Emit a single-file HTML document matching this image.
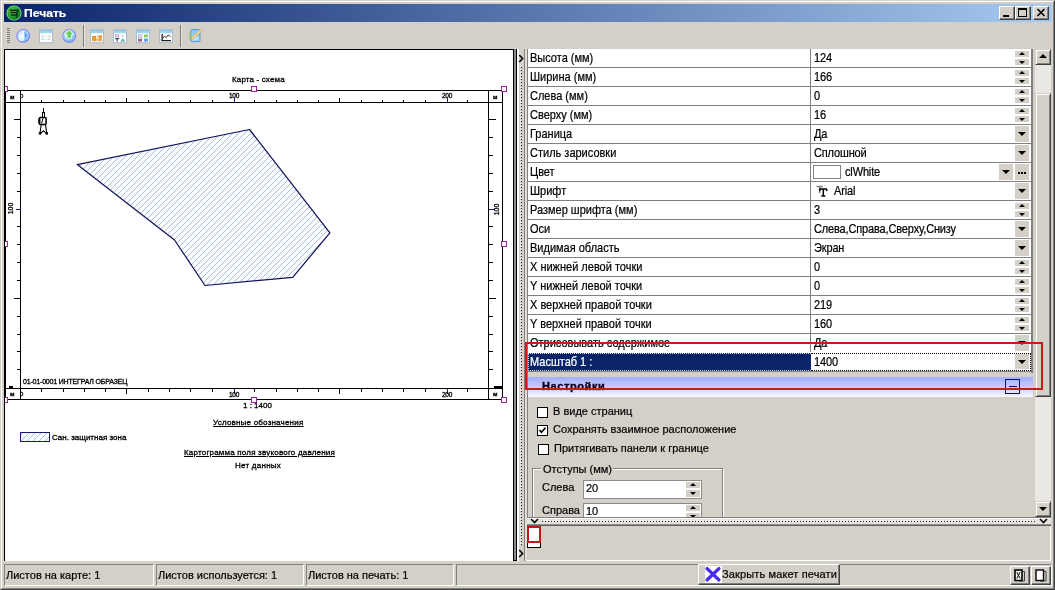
<!DOCTYPE html>
<html lang="ru"><head><meta charset="utf-8"><title>Печать</title>
<style>
html,body{margin:0;padding:0;background:#d4d0c8;}
body{width:1055px;height:590px;overflow:hidden;position:relative;font-family:"Liberation Sans",sans-serif;font-size:11px;color:#000;}
#win{position:absolute;left:0;top:0;width:1055px;height:590px;background:#d4d0c8;overflow:hidden;will-change:transform;}
#win div{position:absolute;box-sizing:border-box;}
#win svg{position:absolute;overflow:visible;}
.t{white-space:nowrap;line-height:13px;height:13px;font-size:11px;-webkit-text-stroke:0.2px currentColor;}
.g{transform:scaleY(1.12);transform-origin:50% 60%;}
.m{white-space:nowrap;line-height:9px;height:9px;font-size:7px;font-family:"Liberation Sans",sans-serif;-webkit-text-stroke:0.3px #000;}
.btn{background:#d4d0c8;border:1px solid;border-color:#fff #404040 #404040 #fff;box-shadow:inset -1px -1px 0 #808080;}
.sb{background:#d4d0c8;border:1px solid;border-color:#d4d0c8 #404040 #404040 #d4d0c8;box-shadow:inset 1px 1px 0 #fff,inset -1px -1px 0 #808080;}
.flat{background:#d4d0c8;}
.tri-d{width:0;height:0;border-left:4px solid transparent;border-right:4px solid transparent;border-top:4px solid #000;}
.tri-u{width:0;height:0;border-left:4px solid transparent;border-right:4px solid transparent;border-bottom:4px solid #000;}
.tri-ds{width:0;height:0;border-left:3px solid transparent;border-right:3px solid transparent;border-top:3px solid #000;}
.tri-us{width:0;height:0;border-left:3px solid transparent;border-right:3px solid transparent;border-bottom:3px solid #000;}
</style></head><body><div id="win">

<div style="left:0px;top:0px;width:1055px;height:590px;border:1px solid;border-color:#d4d0c8 #404040 #404040 #d4d0c8;"></div>
<div style="left:1px;top:1px;width:1053px;height:588px;border:1px solid;border-color:#fff #808080 #808080 #fff;"></div>
<div style="left:4px;top:4px;width:1048px;height:18px;background:linear-gradient(90deg,#0a246a 0%,#a6caf0 100%);"></div>
<svg style="left:5.6px;top:5px" width="16" height="16" viewBox="0 0 16 16">
<defs><radialGradient id="gi" cx="0.4" cy="0.35" r="0.7"><stop offset="0" stop-color="#3fd04f"/><stop offset="0.7" stop-color="#1c9a2c"/><stop offset="1" stop-color="#0a5a18"/></radialGradient></defs>
<circle cx="8" cy="8" r="7.6" fill="#7fe08a"/><circle cx="8" cy="8" r="6.7" fill="url(#gi)"/>
<path d="M4 5.2 H12 L10.2 12.5 M4.5 7.6 H10.8 M5 10 H10.2" stroke="#06300c" stroke-width="1.5" fill="none"/></svg>
<div class="t" style="left:24px;top:7px;font-weight:bold;font-size:11px;color:#fff;transform:scaleX(1.1);transform-origin:0 50%;-webkit-text-stroke:0.2px #fff;">Печать</div>
<div class="btn" style="left:999px;top:6px;width:16px;height:14px;"><div style="left:3px;top:8px;width:6px;height:2px;background:#000"></div></div>
<div class="btn" style="left:1015px;top:6px;width:16px;height:14px;"><div style="left:2px;top:1px;width:9px;height:9px;border:1px solid #000;border-top-width:2px"></div></div>
<div class="btn" style="left:1033px;top:6px;width:16px;height:14px;"><svg style="left:3px;top:2px" width="8" height="7" viewBox="0 0 8 7"><path d="M0.5 0 L7.5 7 M7.5 0 L0.5 7" stroke="#000" stroke-width="1.6"/></svg></div>
<div style="left:7px;top:28px;width:3px;height:1px;background:#7c7c78;"></div>
<div style="left:7px;top:30px;width:3px;height:1px;background:#7c7c78;"></div>
<div style="left:7px;top:32px;width:3px;height:1px;background:#7c7c78;"></div>
<div style="left:7px;top:34px;width:3px;height:1px;background:#7c7c78;"></div>
<div style="left:7px;top:36px;width:3px;height:1px;background:#7c7c78;"></div>
<div style="left:7px;top:38px;width:3px;height:1px;background:#7c7c78;"></div>
<div style="left:7px;top:40px;width:3px;height:1px;background:#7c7c78;"></div>
<div style="left:7px;top:42px;width:3px;height:1px;background:#7c7c78;"></div>
<div style="left:83px;top:25px;width:1px;height:22px;background:#807c70;"></div>
<div style="left:84px;top:25px;width:1px;height:22px;background:#e8e6e0;"></div>
<div style="left:180px;top:25px;width:1px;height:22px;background:#807c70;"></div>
<div style="left:181px;top:25px;width:1px;height:22px;background:#e8e6e0;"></div>
<svg width="0" height="0" style="left:0;top:0"><defs>
<radialGradient id="gg" cx="0.4" cy="0.35" r="0.8"><stop offset="0" stop-color="#e4f2ff"/><stop offset="0.6" stop-color="#9cc8fa"/><stop offset="1" stop-color="#5e9cf0"/></radialGradient>
<pattern id="hatch" width="6" height="6" patternUnits="userSpaceOnUse"><rect width="6" height="6" fill="#fbfdff"/><g fill="#a6bee0" shape-rendering="crispEdges"><rect x="5" y="0" width="1" height="1"/><rect x="4" y="1" width="1" height="1"/><rect x="3" y="2" width="1" height="1"/><rect x="2" y="3" width="1" height="1"/><rect x="1" y="4" width="1" height="1"/><rect x="0" y="5" width="1" height="1"/></g></pattern>
<clipPath id="cv"><rect x="5" y="50" width="508" height="511"/></clipPath>
</defs></svg>
<svg style="left:15px;top:28px" width="16" height="16" viewBox="0 0 16 16">
<circle cx="8.2" cy="7.8" r="7.6" fill="#e0b8e8" opacity=".55"/>
<circle cx="8.2" cy="7.8" r="6.9" fill="#6f82ea"/>
<circle cx="8.2" cy="7.8" r="6.1" fill="url(#gg)"/><ellipse cx="6.4" cy="9.4" rx="3" ry="3.6" fill="#eefaff" opacity=".85"/><path d="M9.2 3.4 Q12.4 5 11.8 8.6 Q10.6 10.4 9.4 9 Q10.4 6.4 9.2 3.4 Z" fill="#4f9cec" opacity=".9"/><path d="M8.6 2.6 Q7.4 6 9 8.4" stroke="#f4fcff" stroke-width="1.2" fill="none"/></svg>
<svg style="left:38px;top:28px" width="16" height="16" viewBox="0 0 16 16">
<rect x="1.5" y="1.7" width="13" height="13" fill="#fdfeff" stroke="#a9bccf"/>
<rect x="2" y="2.2" width="12" height="3" fill="#9fd6f0"/><rect x="2" y="2.2" width="12" height="1" fill="#7cc4ea"/><text x="8" y="12.3" font-size="7.5" text-anchor="middle" fill="#cdd6e0" font-weight="bold" font-family="Liberation Sans, sans-serif">1:2</text></svg>
<svg style="left:61px;top:28px" width="16" height="16" viewBox="0 0 16 16">
<circle cx="8.2" cy="7.8" r="7.6" fill="#e0b8e8" opacity=".55"/>
<circle cx="8.2" cy="7.8" r="6.9" fill="#6f82ea"/>
<circle cx="8.2" cy="7.8" r="6.1" fill="url(#gg)"/><path d="M8.2 1.8 L12.6 6.6 H10.4 V10.2 H6 V6.6 H3.8 Z" fill="#66cc55" stroke="#eaffea" stroke-width="0.9"/></svg>
<svg style="left:89px;top:28px" width="16" height="16" viewBox="0 0 16 16">
<rect x="1.5" y="1.7" width="13" height="13" fill="#fdfeff" stroke="#a9bccf"/>
<rect x="2" y="2.2" width="12" height="3" fill="#9fd6f0"/><rect x="2" y="2.2" width="12" height="1" fill="#7cc4ea"/><rect x="3" y="8" width="4" height="5.2" fill="#e59a3a"/><rect x="7" y="10.2" width="2.5" height="3" fill="#f2c468"/><rect x="9.5" y="7.2" width="3.5" height="6" fill="#eaa848"/><rect x="3" y="8" width="10" height="1" fill="#d08020" opacity=".5"/></svg>
<svg style="left:112px;top:28px" width="16" height="16" viewBox="0 0 16 16">
<rect x="1.5" y="1.7" width="13" height="13" fill="#fdfeff" stroke="#a9bccf"/>
<rect x="2" y="2.2" width="12" height="3" fill="#9fd6f0"/><rect x="2" y="2.2" width="12" height="1" fill="#7cc4ea"/><rect x="3.5" y="6.8" width="3" height="2" fill="none" stroke="#c890c0" stroke-width="0.9"/><path d="M3.2 10.6 H7.2 M5.2 10.6 V13.4" stroke="#404850" stroke-width="1.2"/><path d="M9.6 6.6 L11.6 8.6 M11.6 6.6 L9.6 8.6" stroke="#b0b8c8" stroke-width="0.8"/><path d="M8.4 13.5 L10.8 10.2 L13.2 13.5 Z" fill="#6aa8a0"/></svg>
<svg style="left:135px;top:28px" width="16" height="16" viewBox="0 0 16 16">
<rect x="1.5" y="1.7" width="13" height="13" fill="#fdfeff" stroke="#a9bccf"/>
<rect x="2" y="2.2" width="12" height="3" fill="#9fd6f0"/><rect x="2" y="2.2" width="12" height="1" fill="#7cc4ea"/><rect x="3.5" y="6.8" width="3.4" height="2.4" fill="#f4f0ff" stroke="#b8a8d8" stroke-width="0.9"/><rect x="9" y="6.4" width="4" height="3" fill="#8ccc66"/><rect x="3" y="10.6" width="4.2" height="3" fill="#907078"/><rect x="9" y="10.6" width="4" height="3" fill="#6a9cec"/></svg>
<svg style="left:158px;top:28px" width="16" height="16" viewBox="0 0 16 16">
<rect x="1.5" y="1.7" width="13" height="13" fill="#fdfeff" stroke="#a9bccf"/>
<rect x="2" y="2.2" width="12" height="3" fill="#9fd6f0"/><rect x="2" y="2.2" width="12" height="1" fill="#7cc4ea"/><path d="M4.2 6 V12.6 H13" stroke="#202020" stroke-width="1.3" fill="none"/><path d="M2.8 11.6 L4.2 13 M4.6 10.6 L6.6 8 L8.2 9.6 L10 7 L12.6 8.4" stroke="#303030" stroke-width="0.9" fill="none"/></svg>
<svg style="left:187px;top:28px" width="16" height="16" viewBox="0 0 16 16">
<rect x="3.8" y="1.6" width="9.2" height="12" rx="0.8" fill="#8ccaf4" stroke="#4f9be0"/>
<rect x="5" y="8" width="7" height="4.6" fill="#b4defa"/>
<path d="M1.6 4.6 L4.6 3.6 M1.6 6.8 L4.6 5.8 M1.6 9 L4.6 8 M1.6 11 L4.6 10" stroke="#a8c060" stroke-width="1"/>
<path d="M4.6 9.6 L13.6 1.4 L15 2.8 L6 11 L4 11.6 Z" fill="#f8dc90" stroke="#d8a850" stroke-width="0.7"/></svg>
<div style="left:4px;top:49px;width:509px;height:512px;background:#fff;border-left:1px solid #000;border-top:1px solid #000;"></div>
<svg style="left:0;top:0" width="1055" height="590" viewBox="0 0 1055 590">
<g shape-rendering="crispEdges" stroke="#000" stroke-width="1" fill="none">
<rect x="5.5" y="90.5" width="497" height="309"/>
<path d="M20.5 90.5 V399.5 M488.5 90.5 V399.5 M5.5 102.5 H502.5 M5.5 388.5 H502.5"/>
<path d="M9 386.5 H13 M494 386.5 H502" stroke-width="2"/>
<line x1="41.5" y1="99.5" x2="41.5" y2="102.5"/>
<line x1="41.5" y1="388.5" x2="41.5" y2="391.5"/>
<line x1="63.5" y1="99.5" x2="63.5" y2="102.5"/>
<line x1="63.5" y1="388.5" x2="63.5" y2="391.5"/>
<line x1="84.5" y1="99.5" x2="84.5" y2="102.5"/>
<line x1="84.5" y1="388.5" x2="84.5" y2="391.5"/>
<line x1="105.5" y1="99.5" x2="105.5" y2="102.5"/>
<line x1="105.5" y1="388.5" x2="105.5" y2="391.5"/>
<line x1="126.5" y1="97.5" x2="126.5" y2="102.5"/>
<line x1="126.5" y1="388.5" x2="126.5" y2="393.5"/>
<line x1="148.5" y1="99.5" x2="148.5" y2="102.5"/>
<line x1="148.5" y1="388.5" x2="148.5" y2="391.5"/>
<line x1="169.5" y1="99.5" x2="169.5" y2="102.5"/>
<line x1="169.5" y1="388.5" x2="169.5" y2="391.5"/>
<line x1="190.5" y1="99.5" x2="190.5" y2="102.5"/>
<line x1="190.5" y1="388.5" x2="190.5" y2="391.5"/>
<line x1="212.5" y1="99.5" x2="212.5" y2="102.5"/>
<line x1="212.5" y1="388.5" x2="212.5" y2="391.5"/>
<line x1="254.5" y1="99.5" x2="254.5" y2="102.5"/>
<line x1="254.5" y1="388.5" x2="254.5" y2="391.5"/>
<line x1="276.5" y1="99.5" x2="276.5" y2="102.5"/>
<line x1="276.5" y1="388.5" x2="276.5" y2="391.5"/>
<line x1="297.5" y1="99.5" x2="297.5" y2="102.5"/>
<line x1="297.5" y1="388.5" x2="297.5" y2="391.5"/>
<line x1="318.5" y1="99.5" x2="318.5" y2="102.5"/>
<line x1="318.5" y1="388.5" x2="318.5" y2="391.5"/>
<line x1="339.5" y1="97.5" x2="339.5" y2="102.5"/>
<line x1="339.5" y1="388.5" x2="339.5" y2="393.5"/>
<line x1="361.5" y1="99.5" x2="361.5" y2="102.5"/>
<line x1="361.5" y1="388.5" x2="361.5" y2="391.5"/>
<line x1="382.5" y1="99.5" x2="382.5" y2="102.5"/>
<line x1="382.5" y1="388.5" x2="382.5" y2="391.5"/>
<line x1="403.5" y1="99.5" x2="403.5" y2="102.5"/>
<line x1="403.5" y1="388.5" x2="403.5" y2="391.5"/>
<line x1="425.5" y1="99.5" x2="425.5" y2="102.5"/>
<line x1="425.5" y1="388.5" x2="425.5" y2="391.5"/>
<line x1="467.5" y1="99.5" x2="467.5" y2="102.5"/>
<line x1="467.5" y1="388.5" x2="467.5" y2="391.5"/>
<line x1="16.5" y1="369.5" x2="20.5" y2="369.5"/>
<line x1="488.5" y1="369.5" x2="492.5" y2="369.5"/>
<line x1="16.5" y1="351.5" x2="20.5" y2="351.5"/>
<line x1="488.5" y1="351.5" x2="492.5" y2="351.5"/>
<line x1="16.5" y1="334.5" x2="20.5" y2="334.5"/>
<line x1="488.5" y1="334.5" x2="492.5" y2="334.5"/>
<line x1="16.5" y1="316.5" x2="20.5" y2="316.5"/>
<line x1="488.5" y1="316.5" x2="492.5" y2="316.5"/>
<line x1="13.5" y1="298.5" x2="20.5" y2="298.5"/>
<line x1="488.5" y1="298.5" x2="495.5" y2="298.5"/>
<line x1="16.5" y1="280.5" x2="20.5" y2="280.5"/>
<line x1="488.5" y1="280.5" x2="492.5" y2="280.5"/>
<line x1="16.5" y1="262.5" x2="20.5" y2="262.5"/>
<line x1="488.5" y1="262.5" x2="492.5" y2="262.5"/>
<line x1="16.5" y1="244.5" x2="20.5" y2="244.5"/>
<line x1="488.5" y1="244.5" x2="492.5" y2="244.5"/>
<line x1="16.5" y1="226.5" x2="20.5" y2="226.5"/>
<line x1="488.5" y1="226.5" x2="492.5" y2="226.5"/>
<line x1="16.5" y1="191.5" x2="20.5" y2="191.5"/>
<line x1="488.5" y1="191.5" x2="492.5" y2="191.5"/>
<line x1="16.5" y1="173.5" x2="20.5" y2="173.5"/>
<line x1="488.5" y1="173.5" x2="492.5" y2="173.5"/>
<line x1="16.5" y1="155.5" x2="20.5" y2="155.5"/>
<line x1="488.5" y1="155.5" x2="492.5" y2="155.5"/>
<line x1="16.5" y1="137.5" x2="20.5" y2="137.5"/>
<line x1="488.5" y1="137.5" x2="492.5" y2="137.5"/>
<line x1="13.5" y1="119.5" x2="20.5" y2="119.5"/>
<line x1="488.5" y1="119.5" x2="495.5" y2="119.5"/>
</g>
<g shape-rendering="crispEdges" stroke="#1c1c88" stroke-width="1">
<line x1="234.5" y1="97.5" x2="234.5" y2="102.5"/>
<line x1="234.5" y1="388.5" x2="234.5" y2="393.5"/>
<line x1="447.5" y1="97.5" x2="447.5" y2="102.5"/>
<line x1="447.5" y1="388.5" x2="447.5" y2="393.5"/>
<line x1="15.5" y1="209.5" x2="20.5" y2="209.5"/><line x1="488.5" y1="209.5" x2="494.5" y2="209.5"/>
</g>
<polygon points="77.2,164.6 249.5,129.5 329.9,232.9 292.7,277.3 205,285.5 174.5,240" fill="url(#hatch)" stroke="#14145c" stroke-width="1.25" stroke-linejoin="round"/>
<g stroke="#000" fill="none" stroke-width="1">
<path d="M43.5 108 V112.5 M42.5 112 V117 M44.5 112 V117" shape-rendering="crispEdges"/>
<rect x="39.3" y="117.6" width="6.8" height="6.8" rx="1" stroke-width="1.5"/>
<path d="M39.4 118.6 V123.4" stroke-width="2"/>
<path d="M42.9 118.3 L41.6 123.6" stroke-width="1"/>
<path d="M41.2 125 L40 133 M45.6 125 L46.7 133 M40.3 133.6 L43.4 130.8 L46.7 133.6" stroke-width="1.1"/>
<rect x="39.2" y="132.6" width="1.6" height="1.6" stroke-width="0.9"/><rect x="46" y="132.6" width="1.6" height="1.6" stroke-width="0.9"/>
</g>
<g clip-path="url(#cv)">
<rect x="2.0" y="86.0" width="5" height="5" fill="#fff" stroke="#a020a0" stroke-width="1" shape-rendering="crispEdges"/>
<rect x="251.5" y="86.0" width="5" height="5" fill="#fff" stroke="#a020a0" stroke-width="1" shape-rendering="crispEdges"/>
<rect x="501.0" y="86.0" width="5" height="5" fill="#fff" stroke="#a020a0" stroke-width="1" shape-rendering="crispEdges"/>
<rect x="2.0" y="241.0" width="5" height="5" fill="#fff" stroke="#a020a0" stroke-width="1" shape-rendering="crispEdges"/>
<rect x="501.0" y="241.0" width="5" height="5" fill="#fff" stroke="#a020a0" stroke-width="1" shape-rendering="crispEdges"/>
<rect x="2.0" y="397.0" width="5" height="5" fill="#fff" stroke="#a020a0" stroke-width="1" shape-rendering="crispEdges"/>
<rect x="251.5" y="397.0" width="5" height="5" fill="#fff" stroke="#a020a0" stroke-width="1" shape-rendering="crispEdges"/>
<rect x="501.0" y="397.0" width="5" height="5" fill="#fff" stroke="#a020a0" stroke-width="1" shape-rendering="crispEdges"/>
</g>
<rect x="20.5" y="432.5" width="29" height="9" fill="url(#hatch)" stroke="#1a1a70" stroke-width="1" shape-rendering="crispEdges"/>
</svg>
<div class="m" style="left:232px;top:75px;font-size:8px;letter-spacing:0.15px;">Карта - схема</div>
<div class="m" style="left:10px;top:93px;font-weight:bold;font-size:6px;">м</div>
<div class="m" style="left:493px;top:93px;font-weight:bold;font-size:6px;">м</div>
<div class="m" style="left:10px;top:390px;font-weight:bold;font-size:6px;">м</div>
<div class="m" style="left:493px;top:390px;font-weight:bold;font-size:6px;">м</div>
<div class="m" style="left:229px;top:91px;font-size:6.5px;letter-spacing:-0.3px;">100</div>
<div class="m" style="left:442px;top:91px;font-size:6.5px;letter-spacing:-0.3px;">200</div>
<div class="m" style="left:229px;top:390px;font-size:6.5px;letter-spacing:-0.3px;">100</div>
<div class="m" style="left:442px;top:390px;font-size:6.5px;letter-spacing:-0.3px;">200</div>
<div class="m" style="left:20px;top:92px;font-size:6px;">0</div>
<div class="m" style="left:20px;top:390px;font-size:6px;">0</div>
<div class="m" style="left:4px;top:204px;width:12px;height:9px;transform:rotate(-90deg);transform-origin:center;text-align:center">100</div>
<div class="m" style="left:490px;top:205px;width:12px;height:9px;transform:rotate(-90deg);transform-origin:center;text-align:center">100</div>
<div class="m" style="left:23px;top:377px;letter-spacing:-0.18px;">01-01-0001 ИНТЕГРАЛ ОБРАЗЕЦ</div>
<div class="m" style="left:243px;top:401px;font-size:8px;">1 : 1400</div>
<div class="m" style="left:213px;top:418px;font-size:8px;text-decoration:underline;letter-spacing:0.2px;">Условные обозначения</div>
<div class="m" style="left:52px;top:433px;font-size:8px;">Сан. защитная зона</div>
<div class="m" style="left:184px;top:448px;font-size:8px;text-decoration:underline;letter-spacing:0.2px;">Картограмма поля звукового давления</div>
<div class="m" style="left:235px;top:461px;font-size:8px;letter-spacing:0.25px;">Нет данных</div>
<div style="left:513px;top:49px;width:4px;height:512px;background:#8c8c8c;border:1px solid #000;border-top:none;"></div>
<div style="left:517px;top:49px;width:2px;height:512px;background:#fff;"></div>
<div style="left:519px;top:49px;width:5px;height:512px;background:#d4d0c8;"></div>
<div style="left:520px;top:66px;width:1px;height:480px;background:repeating-linear-gradient(180deg,#fff 0,#fff 1px,transparent 1px,transparent 3px);"></div>
<div style="left:521px;top:67px;width:1px;height:480px;background:repeating-linear-gradient(180deg,#202020 0,#202020 1px,transparent 1px,transparent 3px);"></div>
<div style="left:524px;top:49px;width:1px;height:512px;background:#808080;"></div>
<div style="left:525px;top:49px;width:2px;height:512px;background:#e2dfd9;"></div>
<div style="left:527px;top:49px;width:1px;height:469px;background:#808080;"></div>
<svg style="left:518px;top:54px" width="6" height="9" viewBox="0 0 6 9"><path d="M1.2 1 L4.6 4.5 L1.2 8" stroke="#000" stroke-width="1.6" fill="none"/></svg>
<svg style="left:518px;top:549px" width="6" height="9" viewBox="0 0 6 9"><path d="M1.2 1 L4.6 4.5 L1.2 8" stroke="#000" stroke-width="1.6" fill="none"/></svg>
<div style="left:528px;top:49px;width:503px;height:323px;background:#fff;"></div>
<div style="left:810px;top:49px;width:1px;height:323px;background:#808080;"></div>
<div style="left:1031px;top:49px;width:2px;height:324px;background:#808080;"></div>
<div style="left:528px;top:67px;width:503px;height:1px;background:#808080;"></div>
<div class="t g" style="left:530px;top:51.5px;">Высота (мм)</div>
<div class="t g" style="left:814px;top:51.5px;letter-spacing:-0.15px;">124</div>
<div class="flat" style="left:1015px;top:51px;width:14px;height:6px;"><div class="tri-us" style="left:4px;top:1px"></div></div>
<div class="flat" style="left:1015px;top:59px;width:14px;height:6px;"><div class="tri-ds" style="left:4px;top:2px"></div></div>
<div style="left:528px;top:86px;width:503px;height:1px;background:#808080;"></div>
<div class="t g" style="left:530px;top:70.5px;">Ширина (мм)</div>
<div class="t g" style="left:814px;top:70.5px;letter-spacing:-0.15px;">166</div>
<div class="flat" style="left:1015px;top:70px;width:14px;height:6px;"><div class="tri-us" style="left:4px;top:1px"></div></div>
<div class="flat" style="left:1015px;top:78px;width:14px;height:6px;"><div class="tri-ds" style="left:4px;top:2px"></div></div>
<div style="left:528px;top:105px;width:503px;height:1px;background:#808080;"></div>
<div class="t g" style="left:530px;top:89.5px;">Слева (мм)</div>
<div class="t g" style="left:814px;top:89.5px;letter-spacing:-0.15px;">0</div>
<div class="flat" style="left:1015px;top:89px;width:14px;height:6px;"><div class="tri-us" style="left:4px;top:1px"></div></div>
<div class="flat" style="left:1015px;top:97px;width:14px;height:6px;"><div class="tri-ds" style="left:4px;top:2px"></div></div>
<div style="left:528px;top:124px;width:503px;height:1px;background:#808080;"></div>
<div class="t g" style="left:530px;top:108.5px;">Сверху (мм)</div>
<div class="t g" style="left:814px;top:108.5px;letter-spacing:-0.15px;">16</div>
<div class="flat" style="left:1015px;top:108px;width:14px;height:6px;"><div class="tri-us" style="left:4px;top:1px"></div></div>
<div class="flat" style="left:1015px;top:116px;width:14px;height:6px;"><div class="tri-ds" style="left:4px;top:2px"></div></div>
<div style="left:528px;top:143px;width:503px;height:1px;background:#808080;"></div>
<div class="t g" style="left:530px;top:127.5px;">Граница</div>
<div class="t g" style="left:814px;top:127.5px;letter-spacing:-0.15px;">Да</div>
<div class="flat" style="left:1015px;top:126px;width:14px;height:16px;"><div class="tri-d" style="left:3px;top:6px"></div></div>
<div style="left:528px;top:162px;width:503px;height:1px;background:#808080;"></div>
<div class="t g" style="left:530px;top:146.5px;">Стиль зарисовки</div>
<div class="t g" style="left:814px;top:146.5px;letter-spacing:-0.15px;">Сплошной</div>
<div class="flat" style="left:1015px;top:145px;width:14px;height:16px;"><div class="tri-d" style="left:3px;top:6px"></div></div>
<div style="left:528px;top:181px;width:503px;height:1px;background:#808080;"></div>
<div class="t g" style="left:530px;top:165.5px;">Цвет</div>
<div style="left:813px;top:165px;width:28px;height:14px;background:#fff;border:1px solid #808080;"></div>
<div class="t g" style="left:845px;top:165.5px;letter-spacing:-0.15px;">clWhite</div>
<div class="flat" style="left:999px;top:164px;width:14px;height:16px;"><div class="tri-d" style="left:3px;top:6px"></div></div>
<div class="flat" style="left:1015px;top:164px;width:14px;height:16px;"><div style="left:3px;top:8px;width:2px;height:2px;background:#000;box-shadow:3px 0 0 #000,6px 0 0 #000"></div></div>
<div style="left:528px;top:200px;width:503px;height:1px;background:#808080;"></div>
<div class="t g" style="left:530px;top:184.5px;">Шрифт</div>
<svg style="left:816px;top:185px" width="12" height="12" viewBox="0 0 12 12"><path d="M0.5 1.5 H7 M3.7 1.5 V8" stroke="#808080" stroke-width="1.6" fill="none"/><path d="M3.5 4 H11 M7.3 4 V11 M5.3 11 H9.3 M3.8 4 V6 M10.7 4 V6" stroke="#000" stroke-width="1.5" fill="none"/></svg>
<div class="t g" style="left:834px;top:184.5px;letter-spacing:-0.15px;">Arial</div>
<div class="flat" style="left:1015px;top:183px;width:14px;height:16px;"><div class="tri-d" style="left:3px;top:6px"></div></div>
<div style="left:528px;top:219px;width:503px;height:1px;background:#808080;"></div>
<div class="t g" style="left:530px;top:203.5px;">Размер шрифта (мм)</div>
<div class="t g" style="left:814px;top:203.5px;letter-spacing:-0.15px;">3</div>
<div class="flat" style="left:1015px;top:203px;width:14px;height:6px;"><div class="tri-us" style="left:4px;top:1px"></div></div>
<div class="flat" style="left:1015px;top:211px;width:14px;height:6px;"><div class="tri-ds" style="left:4px;top:2px"></div></div>
<div style="left:528px;top:238px;width:503px;height:1px;background:#808080;"></div>
<div class="t g" style="left:530px;top:222.5px;">Оси</div>
<div class="t g" style="left:814px;top:222.5px;letter-spacing:-0.15px;">Слева,Справа,Сверху,Снизу</div>
<div class="flat" style="left:1015px;top:221px;width:14px;height:16px;"><div class="tri-d" style="left:3px;top:6px"></div></div>
<div style="left:528px;top:257px;width:503px;height:1px;background:#808080;"></div>
<div class="t g" style="left:530px;top:241.5px;">Видимая область</div>
<div class="t g" style="left:814px;top:241.5px;letter-spacing:-0.15px;">Экран</div>
<div class="flat" style="left:1015px;top:240px;width:14px;height:16px;"><div class="tri-d" style="left:3px;top:6px"></div></div>
<div style="left:528px;top:276px;width:503px;height:1px;background:#808080;"></div>
<div class="t g" style="left:530px;top:260.5px;">X нижней левой точки</div>
<div class="t g" style="left:814px;top:260.5px;letter-spacing:-0.15px;">0</div>
<div class="flat" style="left:1015px;top:260px;width:14px;height:6px;"><div class="tri-us" style="left:4px;top:1px"></div></div>
<div class="flat" style="left:1015px;top:268px;width:14px;height:6px;"><div class="tri-ds" style="left:4px;top:2px"></div></div>
<div style="left:528px;top:295px;width:503px;height:1px;background:#808080;"></div>
<div class="t g" style="left:530px;top:279.5px;">Y нижней левой точки</div>
<div class="t g" style="left:814px;top:279.5px;letter-spacing:-0.15px;">0</div>
<div class="flat" style="left:1015px;top:279px;width:14px;height:6px;"><div class="tri-us" style="left:4px;top:1px"></div></div>
<div class="flat" style="left:1015px;top:287px;width:14px;height:6px;"><div class="tri-ds" style="left:4px;top:2px"></div></div>
<div style="left:528px;top:314px;width:503px;height:1px;background:#808080;"></div>
<div class="t g" style="left:530px;top:298.5px;">X верхней правой точки</div>
<div class="t g" style="left:814px;top:298.5px;letter-spacing:-0.15px;">219</div>
<div class="flat" style="left:1015px;top:298px;width:14px;height:6px;"><div class="tri-us" style="left:4px;top:1px"></div></div>
<div class="flat" style="left:1015px;top:306px;width:14px;height:6px;"><div class="tri-ds" style="left:4px;top:2px"></div></div>
<div style="left:528px;top:333px;width:503px;height:1px;background:#808080;"></div>
<div class="t g" style="left:530px;top:317.5px;">Y верхней правой точки</div>
<div class="t g" style="left:814px;top:317.5px;letter-spacing:-0.15px;">160</div>
<div class="flat" style="left:1015px;top:317px;width:14px;height:6px;"><div class="tri-us" style="left:4px;top:1px"></div></div>
<div class="flat" style="left:1015px;top:325px;width:14px;height:6px;"><div class="tri-ds" style="left:4px;top:2px"></div></div>
<div style="left:528px;top:352px;width:503px;height:1px;background:#808080;"></div>
<div class="t g" style="left:530px;top:336.5px;">Отрисовывать содержимое</div>
<div class="t g" style="left:814px;top:336.5px;letter-spacing:-0.15px;">Да</div>
<div class="flat" style="left:1015px;top:335px;width:14px;height:16px;"><div class="tri-d" style="left:3px;top:6px"></div></div>
<div style="left:528px;top:371px;width:503px;height:1px;background:#808080;"></div>
<div style="left:528px;top:352px;width:503px;height:1px;background:#fff;"></div>
<div style="left:528px;top:353px;width:283px;height:18px;background:#0a246a;"></div>
<div style="left:528px;top:353px;width:283px;height:18px;border:1px dotted #e4e4f0;border-right:none;"></div>
<div style="left:811px;top:353px;width:220px;height:18px;border:1px dotted #000;border-left:none;background:#fff;"></div>
<div class="t g" style="left:530px;top:355.5px;color:#fff;">Масштаб 1 :</div>
<div class="t g" style="left:814px;top:355.5px;letter-spacing:-0.15px;">1400</div>
<div class="flat" style="left:1015px;top:354px;width:14px;height:15px;"><div class="tri-d" style="left:3px;top:6px"></div></div>
<div style="left:528px;top:377px;width:505px;height:20px;background:linear-gradient(180deg,#a4aefc 0%,#c6ccfd 50%,#f8f8ff 100%);"></div>
<div class="t" style="left:542px;top:380px;font-weight:bold;font-size:11px;letter-spacing:0.6px;-webkit-text-stroke:0.3px #000;">Настройки</div>
<div style="left:1005px;top:379px;width:15px;height:15px;border:1px solid #101060;"><div style="left:3px;top:6px;width:8px;height:1px;background:#101060"></div></div>
<div style="left:537px;top:407px;width:11px;height:11px;background:#fff;border:1px solid #000;"></div>
<div class="t" style="left:553px;top:405px;">В виде страниц</div>
<div style="left:537px;top:425px;width:11px;height:11px;background:#fff;border:1px solid #000;"><svg style="left:0px;top:0px" width="9" height="9" viewBox="0 0 9 9"><path d="M1.5 4 L3.5 6.2 L7.5 1.8" stroke="#000" stroke-width="1.7" fill="none"/></svg></div>
<div class="t" style="left:553px;top:423px;">Сохранять взаимное расположение</div>
<div style="left:538px;top:444px;width:11px;height:11px;background:#fff;border:1px solid #000;"></div>
<div class="t" style="left:554px;top:442px;">Притягивать панели к границе</div>
<div style="left:532px;top:468px;width:191px;height:60px;border:1px solid #808080;box-shadow:inset 1px 1px 0 #fff, 1px 1px 0 #fff;"></div>
<div style="left:541px;top:461px;width:72px;height:14px;background:#d4d0c8;"></div>
<div class="t" style="left:543px;top:463px;">Отступы (мм)</div>
<div class="t" style="left:542px;top:481px;">Слева</div>
<div style="left:583px;top:480px;width:119px;height:19px;background:#fff;border:1px solid #8c8a86;"></div>
<div class="t" style="left:586px;top:482px;">20</div>
<div class="flat" style="left:686px;top:482px;width:14px;height:6px;"><div class="tri-us" style="left:4px;top:1px"></div></div>
<div class="flat" style="left:686px;top:490px;width:14px;height:7px;"><div class="tri-ds" style="left:4px;top:2px"></div></div>
<div class="t" style="left:542px;top:504px;">Справа</div>
<div style="left:583px;top:503px;width:119px;height:19px;background:#fff;border:1px solid #8c8a86;"></div>
<div class="t" style="left:586px;top:505px;">10</div>
<div class="flat" style="left:686px;top:505px;width:14px;height:6px;"><div class="tri-us" style="left:4px;top:1px"></div></div>
<div class="flat" style="left:686px;top:513px;width:14px;height:7px;"><div class="tri-ds" style="left:4px;top:2px"></div></div>
<div style="left:1035px;top:49px;width:16px;height:469px;background:#eae8e3;"></div>
<div class="sb" style="left:1035px;top:49px;width:16px;height:16px;"><div class="tri-u" style="left:3px;top:4px"></div></div>
<div class="sb" style="left:1035px;top:93px;width:16px;height:304px;"></div>
<div class="sb" style="left:1035px;top:501px;width:16px;height:16px;"><div class="tri-d" style="left:3px;top:5px"></div></div>
<div style="left:527px;top:517px;width:524px;height:1px;background:#808080;"></div>
<div style="left:527px;top:518px;width:524px;height:1px;background:#fff;"></div>
<div style="left:527px;top:519px;width:524px;height:5px;background:#e6e3dd;"></div>
<div style="left:541px;top:520px;width:493px;height:1px;background:repeating-linear-gradient(90deg,#fff 0,#fff 1px,transparent 1px,transparent 3px);"></div>
<div style="left:542px;top:521px;width:493px;height:1px;background:repeating-linear-gradient(90deg,#202020 0,#202020 1px,transparent 1px,transparent 3px);"></div>
<div style="left:527px;top:524px;width:524px;height:1px;background:#909090;"></div>
<div style="left:527px;top:525px;width:524px;height:1px;background:#606060;"></div>
<svg style="left:530px;top:518px" width="9" height="6" viewBox="0 0 9 6"><path d="M1 1 L4.5 4.5 L8 1" stroke="#000" stroke-width="1.6" fill="none"/></svg>
<svg style="left:1039px;top:518px" width="9" height="6" viewBox="0 0 9 6"><path d="M1 1 L4.5 4.5 L8 1" stroke="#000" stroke-width="1.6" fill="none"/></svg>
<div style="left:527px;top:526px;width:524px;height:35px;background:#d4d0c8;border-right:1px solid #fff;border-bottom:1px solid #fff;"></div>
<div style="left:527px;top:526px;width:14px;height:22px;background:#fff;border:1px solid #000;"></div>
<div style="left:527px;top:526px;width:14px;height:17px;border:2px solid #c01818;"></div>
<div style="left:4px;top:564px;width:150px;height:22px;border:1px solid;border-color:#808080 #fff #fff #808080;"></div>
<div style="left:156px;top:564px;width:148px;height:22px;border:1px solid;border-color:#808080 #fff #fff #808080;"></div>
<div style="left:306px;top:564px;width:148px;height:22px;border:1px solid;border-color:#808080 #fff #fff #808080;"></div>
<div style="left:456px;top:564px;width:596px;height:22px;border:1px solid;border-color:#808080 #fff #fff #808080;"></div>
<div class="t" style="left:6px;top:569px;">Листов на карте: 1</div>
<div class="t" style="left:158px;top:569px;">Листов используется: 1</div>
<div class="t" style="left:308px;top:569px;">Листов на печать: 1</div>
<div class="btn" style="left:698px;top:564px;width:142px;height:21px;"></div>
<div style="left:705px;top:566px;width:17px;height:17px;background:#fff;"></div>
<svg style="left:705px;top:566px" width="16" height="16" viewBox="0 0 16 16"><path d="M2 2.5 L14 14 M14 2.5 L2 14" stroke="#4a2cf0" stroke-width="3.2" stroke-linecap="round"/></svg>
<div class="t" style="left:722px;top:568px;letter-spacing:0.13px;">Закрыть макет печати</div>
<div class="btn" style="left:1010px;top:566px;width:20px;height:19px;"></div>
<svg style="left:1014px;top:569px" width="13" height="13" viewBox="0 0 13 13"><path d="M6 2.5 H10.5 V12 H5" stroke="#404040" fill="none"/><rect x="1" y="1" width="7" height="10.5" fill="#fff" stroke="#000" stroke-width="1.6"/><path d="M2.8 3 L6.2 9.5 M6.2 3 L2.8 9.5" stroke="#000" stroke-width="1"/></svg>
<div class="btn" style="left:1031px;top:566px;width:20px;height:19px;"></div>
<svg style="left:1035px;top:569px" width="13" height="13" viewBox="0 0 13 13"><path d="M6 2.5 H11 V12 H5" stroke="#404040" fill="none"/><rect x="1" y="1" width="7.5" height="10.5" fill="#fff" stroke="#000" stroke-width="1.4"/></svg>
<div style="left:525px;top:342px;width:518px;height:48px;border:2px solid #d01818;"></div>
</div></body></html>
